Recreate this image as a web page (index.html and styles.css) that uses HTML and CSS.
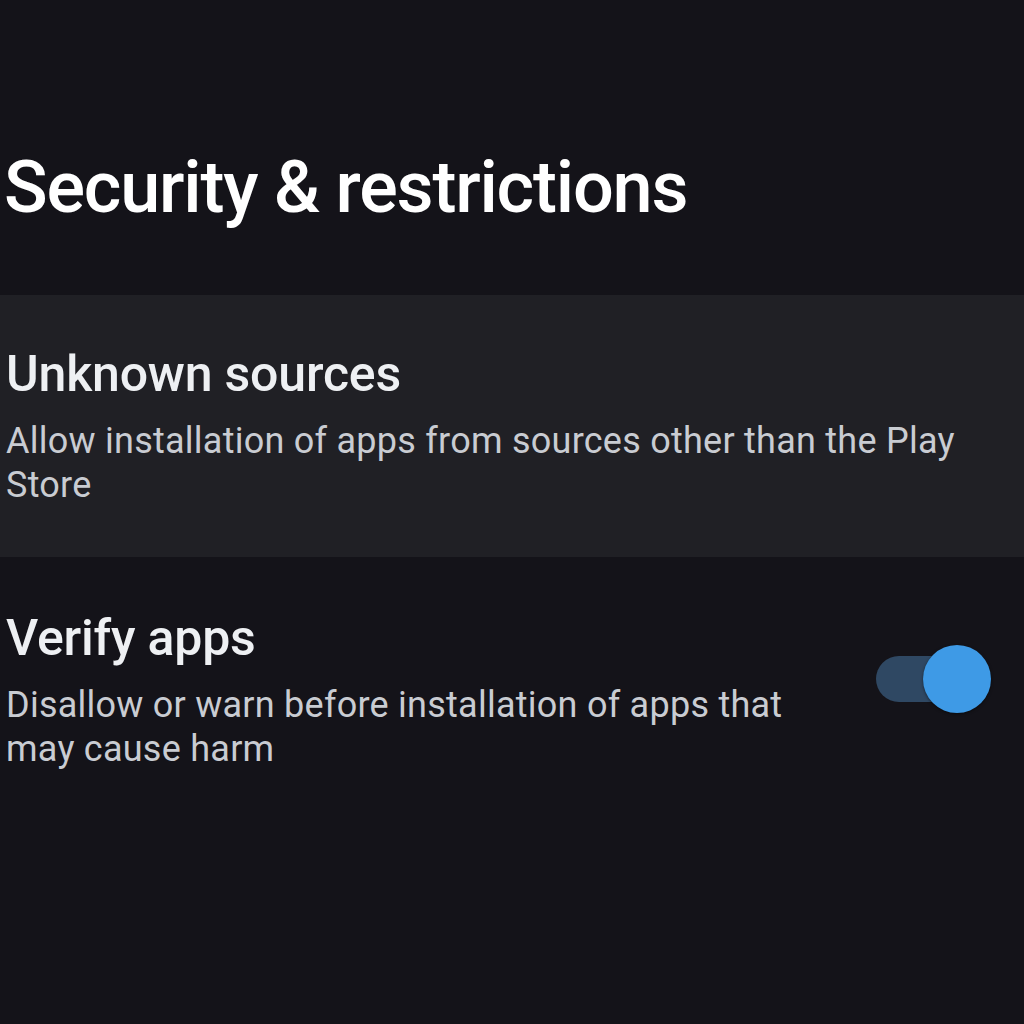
FILE: index.html
```html
<!DOCTYPE html>
<html lang="en">
<head>
    <meta charset="UTF-8">
    <meta name="viewport" content="width=device-width, initial-scale=1.0">
    <title>Security &amp; restrictions</title>
    <link rel="stylesheet" href="styles.css">
</head>
<body>
    <h1 class="page-title">Security &amp; restrictions</h1>

    <div class="pref-list">
        <!-- Unknown sources (focused row) -->
        <div class="pref-item focused">
            <div class="pref-text">
                <div class="pref-title">Unknown sources</div>
                <div class="pref-summary">Allow installation of apps from sources other than the Play Store</div>
            </div>
        </div>

        <!-- Verify apps -->
        <div class="pref-item">
            <div class="pref-text narrow">
                <div class="pref-title">Verify apps</div>
                <div class="pref-summary">Disallow or warn before installation of apps that may cause harm</div>
            </div>
            <div class="switch on">
                <span class="track"></span>
                <span class="thumb"></span>
            </div>
        </div>
    </div>
</body>
</html>
```

FILE: styles.css
```css
html, body {
    margin: 0;
    padding: 0;
    background-color: #141319;
    font-family: Roboto, "Liberation Sans", sans-serif;
    color: #f2f3f5;
}
body {
    width: 1024px;
    height: 1024px;
    overflow: hidden;
}
.page-title {
    margin: 0;
    padding: 140px 0 0 4px;
    height: 295px;
    box-sizing: border-box;
    font-size: 72px;
    font-weight: 500;
    line-height: 96px;
    letter-spacing: -1.2px;
    color: #ffffff;
}
.pref-list {
    display: flex;
    flex-direction: column;
}
.pref-item {
    display: flex;
    align-items: flex-start;
    justify-content: space-between;
    padding: 51px 33px 0 6px;
}
.pref-item.focused {
    background-color: #202025;
    height: 262px;
    box-sizing: border-box;
    padding-top: 49px;
}
.pref-text.narrow {
    width: 790px;
}
.pref-title {
    font-size: 50px;
    font-weight: 500;
    line-height: 60px;
    letter-spacing: -0.2px;
    color: #eef0f3;
}
.pref-summary {
    margin-top: 15px;
    font-size: 36px;
    line-height: 44px;
    letter-spacing: 0.25px;
    color: #c9ccd2;
}
.switch {
    position: relative;
    width: 115px;
    height: 68px;
    margin-top: 37px;
    flex-shrink: 0;
}
.switch .track {
    position: absolute;
    left: 0;
    top: 11px;
    width: 100px;
    height: 46px;
    border-radius: 23px;
    background-color: #2f4863;
}
.switch .thumb {
    position: absolute;
    right: 0;
    top: 0;
    width: 68px;
    height: 68px;
    border-radius: 50%;
    background-color: #3e9ae6;
    box-shadow: 0 1px 3px rgba(0, 0, 0, 0.5);
}
```
